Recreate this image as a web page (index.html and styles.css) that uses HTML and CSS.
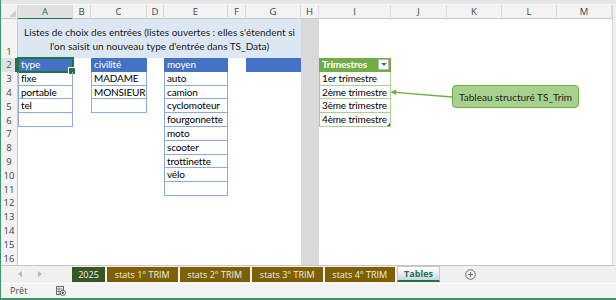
FILE: index.html
```html
<!DOCTYPE html>
<html lang="fr">
<head>
  <meta charset="UTF-8">
  <title>Tables</title>
  <link rel="stylesheet" href="styles.css">
</head>
<body>
  <div class="window">
    <div class="topstrip"></div>

    <div class="sheet">
      <div class="corner"></div>
      <div class="colhdr">
        <div class="sel">A</div><div>B</div><div>C</div><div>D</div><div>E</div><div>F</div><div>G</div>
        <div>H</div><div>I</div><div>J</div><div>K</div><div>L</div><div>M</div>
      </div>
      <div class="vscroll"></div>

      <div class="rowhdr">
        <div class="first">1</div><div class="sel">2</div><div>3</div><div>4</div><div>5</div><div>6</div>
        <div>7</div><div>8</div><div>9</div><div>10</div><div>11</div><div>12</div><div>13</div>
        <div>14</div><div>15</div><div>16</div>
      </div>

      <div class="title">Listes de choix des entrées (listes ouvertes : elles s'étendent si<br>l'on saisit un nouveau type d'entrée dans TS_Data)</div>
      <div class="fill-h"></div>

      <!-- tables -->
      <div class="tbl blue c-a r5">
        <div class="th active">type</div>
        <div>fixe</div>
        <div>portable</div>
        <div>tel</div>
        <div></div>
      </div>
      <div class="tbl blue c-c r4">
        <div class="th">civilité</div>
        <div>MADAME</div>
        <div>MONSIEUR</div>
        <div></div>
      </div>
      <div class="tbl blue c-e r10">
        <div class="th">moyen</div>
        <div>auto</div>
        <div>camion</div>
        <div>cyclomoteur</div>
        <div>fourgonnette</div>
        <div>moto</div>
        <div>scooter</div>
        <div>trottinette</div>
        <div>vélo</div>
        <div></div>
      </div>
      <div class="tbl blue c-g r1">
        <div class="th"></div>
      </div>
      <div class="tbl green c-i r5">
        <div class="th bold">Trimestres<span class="dd"></span></div>
        <div>1er trimestre</div>
        <div>2ème trimestre</div>
        <div>3ème trimestre</div>
        <div class="last">4ème trimestre</div>
      </div>

      <!-- forme posée sur la feuille -->
      <svg class="arrow" width="68" height="14" viewBox="0 0 68 14">
        <line x1="64" y1="11" x2="7" y2="6.3" stroke="#70ad47" stroke-width="1.3"/>
        <polygon points="2.5,6 8.4,3.4 7.9,9" fill="#70ad47"/>
      </svg>
      <div class="callout">Tableau structuré TS_Trim</div>
    </div>

    <div class="tabbar">
      <div class="nav">
        <svg width="4" height="6" viewBox="0 0 4 6"><polygon points="4,0 4,6 0,3" fill="#b8b8b8"/></svg>
        <svg width="4" height="6" viewBox="0 0 4 6"><polygon points="0,0 0,6 4,3" fill="#b8b8b8"/></svg>
      </div>
      <div class="tab year">2025</div>
      <div class="tab">stats 1° TRIM</div>
      <div class="tab">stats 2° TRIM</div>
      <div class="tab">stats 3° TRIM</div>
      <div class="tab">stats 4° TRIM</div>
      <div class="tab active">Tables</div>
      <svg class="add" width="11" height="11" viewBox="0 0 11 11">
        <circle cx="5.5" cy="5.5" r="4.8" fill="none" stroke="#6b6b6b" stroke-width="1"/>
        <path d="M5.5 3v5M3 5.5h5" stroke="#6b6b6b" stroke-width="1"/>
      </svg>
    </div>

    <div class="status">
      <span>Prêt</span>
      <svg class="macro" width="10" height="10" viewBox="0 0 10 10">
        <rect x="0.5" y="0.5" width="7" height="8" fill="#fff" stroke="#6b6b6b"/>
        <path d="M0.5 3h7M0.5 5.5h4M3 0.5v8" stroke="#6b6b6b" stroke-width="0.8"/>
        <circle cx="6.8" cy="6.8" r="2.6" fill="#fff" stroke="#555" stroke-width="0.9"/>
        <circle cx="6.8" cy="6.8" r="1.2" fill="#555"/>
      </svg>
    </div>
  </div>
</body>
</html>
```

FILE: styles.css
```css
* {
  box-sizing: border-box;
}
body {
  margin: 0;
  font-family: "Lato", "Liberation Sans", sans-serif;
  background-color: #fff;
}
.window {
  width: 616px;
  height: 300px;
  border-left: 1px solid #3c9a6c;
  border-bottom: 2px solid #3c9a6c;
  display: flex;
  flex-direction: column;
  overflow: hidden;
}
.topstrip {
  height: 5px;
  background-color: #e6e6e6;
  border-bottom: 1px solid #f8f8f8;
}

/* feuille */
.sheet {
  position: relative;
  display: grid;
  grid-template-columns: 17px 55px 18px 56px 17px 64px 18px 55px 18px 72px 56px 55px 55px 55px 1fr;
  grid-template-rows: 14px 39px repeat(15, 13.8px);
}
.corner {
  grid-column: 1;
  grid-row: 1;
  background-color: #f3f3f3;
  border-right: 1px solid #d4d4d4;
  border-bottom: 1px solid #c8c8c8;
  position: relative;
}
.corner::after {
  content: "";
  position: absolute;
  left: 8px;
  top: 5px;
  width: 7px;
  height: 7px;
  background-color: #cfcfcf;
  clip-path: polygon(100% 0, 100% 100%, 0 100%);
}
.colhdr {
  grid-column: 2 / 15;
  grid-row: 1;
  display: grid;
  grid-template-columns: 55px 18px 56px 17px 64px 18px 55px 18px 72px 56px 55px 55px 55px;
  background-color: #f3f3f3;
  border-bottom: 1px solid #c8c8c8;
  font-family: "Open Sans", sans-serif;
  font-size: 9.5px;
  color: #444;
}
.colhdr div {
  border-right: 1px solid #dadada;
  text-align: center;
  line-height: 13px;
}
.colhdr .sel {
  background-color: #e1e1e1;
  color: #217346;
  border-bottom: 2px solid #217346;
}
.vscroll {
  grid-column: 15;
  grid-row: 1 / 18;
  background-color: #f0f0f0;
  border-left: 1px solid #d4d4d4;
}
.rowhdr {
  grid-column: 1;
  grid-row: 2 / 18;
  display: grid;
  grid-template-rows: 39px repeat(15, 13.8px);
  background-color: #f3f3f3;
  border-right: 1px solid #c8c8c8;
  font-family: "Open Sans", sans-serif;
  font-size: 9.5px;
  color: #444;
}
.rowhdr div {
  display: flex;
  align-items: center;
  justify-content: center;
}
.rowhdr .first {
  align-items: flex-end;
}
.rowhdr .sel {
  background-color: #e1e1e1;
  color: #217346;
  box-shadow: inset -2px 0 #217346;
}
.title {
  grid-column: 2 / 9;
  grid-row: 2;
  background-color: #dde7f3;
  display: flex;
  align-items: flex-end;
  justify-content: center;
  text-align: center;
  font-size: 10px;
  line-height: 14px;
  padding-bottom: 5px;
  color: #1a1a1a;
}
.fill-h {
  grid-column: 9;
  grid-row: 2 / 18;
  background-color: #d9d9d9;
}

/* tableaux structurés */
.tbl {
  display: grid;
  grid-auto-rows: 13.8px;
  grid-row-start: 3;
  font-size: 10px;
  letter-spacing: -0.15px;
}
.tbl div {
  position: relative;
  border: 1px solid var(--line);
  border-top: none;
  padding-left: 2px;
  line-height: 13px;
  white-space: nowrap;
  color: #000;
}
.tbl .th {
  background-color: var(--head);
  border-color: var(--head);
  color: #fff;
}
.tbl .bold {
  font-weight: bold;
}
.blue {
  --line: #8eaadb;
  --head: #4472c4;
}
.green {
  --line: #a9d08e;
  --head: #70ad47;
}
.c-a { grid-column: 2; }
.c-c { grid-column: 4; }
.c-e { grid-column: 6; }
.c-g { grid-column: 8; }
.c-i { grid-column: 10; }
.r1 { grid-row-end: span 1; }
.r4 { grid-row-end: span 4; }
.r5 { grid-row-end: span 5; }
.r10 { grid-row-end: span 10; }

.tbl .active {
  outline: 2px solid #217346;
  outline-offset: -1px;
}
.tbl .active::after {
  content: "";
  position: absolute;
  right: -4px;
  bottom: -4px;
  width: 6px;
  height: 6px;
  background-color: #217346;
  border: 1px solid #fff;
}
.dd {
  position: absolute;
  right: 1px;
  top: 1px;
  width: 11px;
  height: 11px;
  background-color: #fafafa;
  border: 1px solid #b4b4b4;
}
.dd::after {
  content: "";
  position: absolute;
  left: 2px;
  top: 3px;
  border-left: 3px solid transparent;
  border-right: 3px solid transparent;
  border-top: 3px solid #666;
}
.tbl .last::after {
  content: "";
  position: absolute;
  right: 0;
  bottom: 0;
  width: 3px;
  height: 3px;
  background-color: #2f5597;
  clip-path: polygon(100% 0, 100% 100%, 0 100%);
}

/* forme */
.arrow {
  position: absolute;
  left: 387px;
  top: 81px;
}
.callout {
  position: absolute;
  left: 451px;
  top: 80px;
  width: 127px;
  height: 23px;
  background-color: #a9d18e;
  border: 1px solid #6fac46;
  border-radius: 4px;
  display: flex;
  align-items: center;
  justify-content: center;
  font-size: 10px;
  color: #222;
}

/* onglets */
.tabbar {
  height: 18px;
  background-color: #f0f0f0;
  border-top: 1px solid #c6c6c6;
  padding-top: 1px;
  display: flex;
  align-items: flex-start;
}
.nav {
  width: 71px;
  height: 15px;
  display: flex;
  align-items: center;
  gap: 16px;
  padding-left: 17px;
}
.tab {
  width: 70.5px;
  height: 15px;
  margin-right: 2px;
  background-color: #7f6000;
  color: #eee;
  font-family: "Open Sans", sans-serif;
  font-size: 9px;
  display: flex;
  align-items: center;
  justify-content: center;
  white-space: nowrap;
}
.tab.year {
  width: 33px;
  background-color: #375623;
}
.tab.active {
  width: 43px;
  height: 16px;
  margin-top: -1px;
  background: linear-gradient(#ffffff, #e6e9f2 55%, #cdd3e4);
  color: #217346;
  font-weight: bold;
  border: 1px solid #c6c6c6;
  border-bottom: 2px solid #217346;
}
.add {
  margin-left: 23px;
  margin-top: 2px;
}

/* barre d'état */
.status {
  height: 15px;
  background-color: #f3f3f3;
  border-top: 1px solid #fff;
  display: flex;
  align-items: center;
  padding-left: 9px;
  font-family: "Open Sans", sans-serif;
  font-size: 9px;
  color: #444;
}
.macro {
  margin-left: 29px;
}
```
